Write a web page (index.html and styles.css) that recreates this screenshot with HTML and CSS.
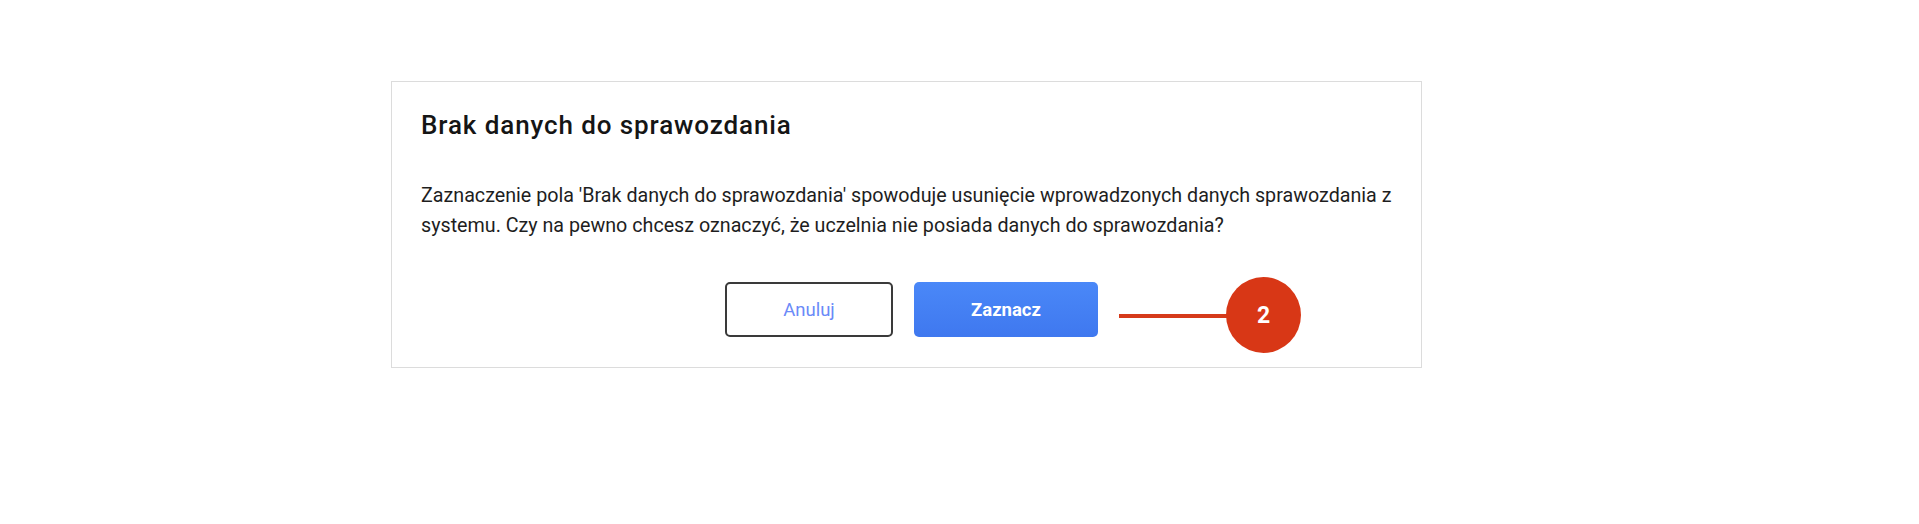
FILE: index.html
```html
<!DOCTYPE html>
<html lang="pl">
<head>
  <meta charset="UTF-8">
  <meta name="viewport" content="width=device-width, initial-scale=1">
  <title>Brak danych do sprawozdania</title>
  <link rel="stylesheet" href="styles.css">
</head>
<body>
  <div class="dialog">
    <h2 class="dialog-title">Brak danych do sprawozdania</h2>
    <p class="dialog-text">Zaznaczenie pola 'Brak danych do sprawozdania' spowoduje usunięcie wprowadzonych danych sprawozdania z systemu. Czy na pewno chcesz oznaczyć, że uczelnia nie posiada danych do sprawozdania?</p>
    <div class="dialog-actions">
      <button type="button" class="btn btn-cancel">Anuluj</button>
      <button type="button" class="btn btn-primary">Zaznacz</button>
    </div>
    <!-- znacznik instrukcji -->
    <div class="marker-line"></div>
    <div class="marker">2</div>
  </div>
</body>
</html>
```
FILE: styles.css
```css
body { margin: 0; background: #fff; font-family: Roboto, 'Liberation Sans', sans-serif; }
.dialog { position: relative; box-sizing: border-box; width: 1031px; height: 287px; margin: 81px 0 0 391px; padding: 28px 29px 29px; border: 1px solid #dcdcdc; background: #fff; }
.dialog-title { margin: 0; font-size: 26px; line-height: 30px; letter-spacing: 0.9px; font-weight: 500; color: #151515; }
.dialog-text { margin: 41px 0 0; font-size: 19.7px; line-height: 30px; color: #1e1e1e; }
.dialog-actions { display: flex; justify-content: center; gap: 21px; margin-top: 41px; padding-left: 10px; }
.btn { height: 55px; border-radius: 5px; font-family: inherit; font-size: 18.5px; cursor: pointer; }
.btn-cancel { width: 168px; background: #fff; border: 2px solid #3a3a3a; color: #6b8af8; }
.btn-primary { width: 184px; border: none; background: linear-gradient(#4a88f8, #3f78ef); color: #fff; font-weight: 700; }
.marker-line { position: absolute; left: 727px; top: 232px; width: 110px; height: 4px; background: #d63a1a; }
.marker { position: absolute; left: 834px; top: 195px; width: 75px; height: 76px; border-radius: 50%; background: #d83716; color: #fff; font-size: 23px; font-weight: 700; display: flex; align-items: center; justify-content: center; }
```
